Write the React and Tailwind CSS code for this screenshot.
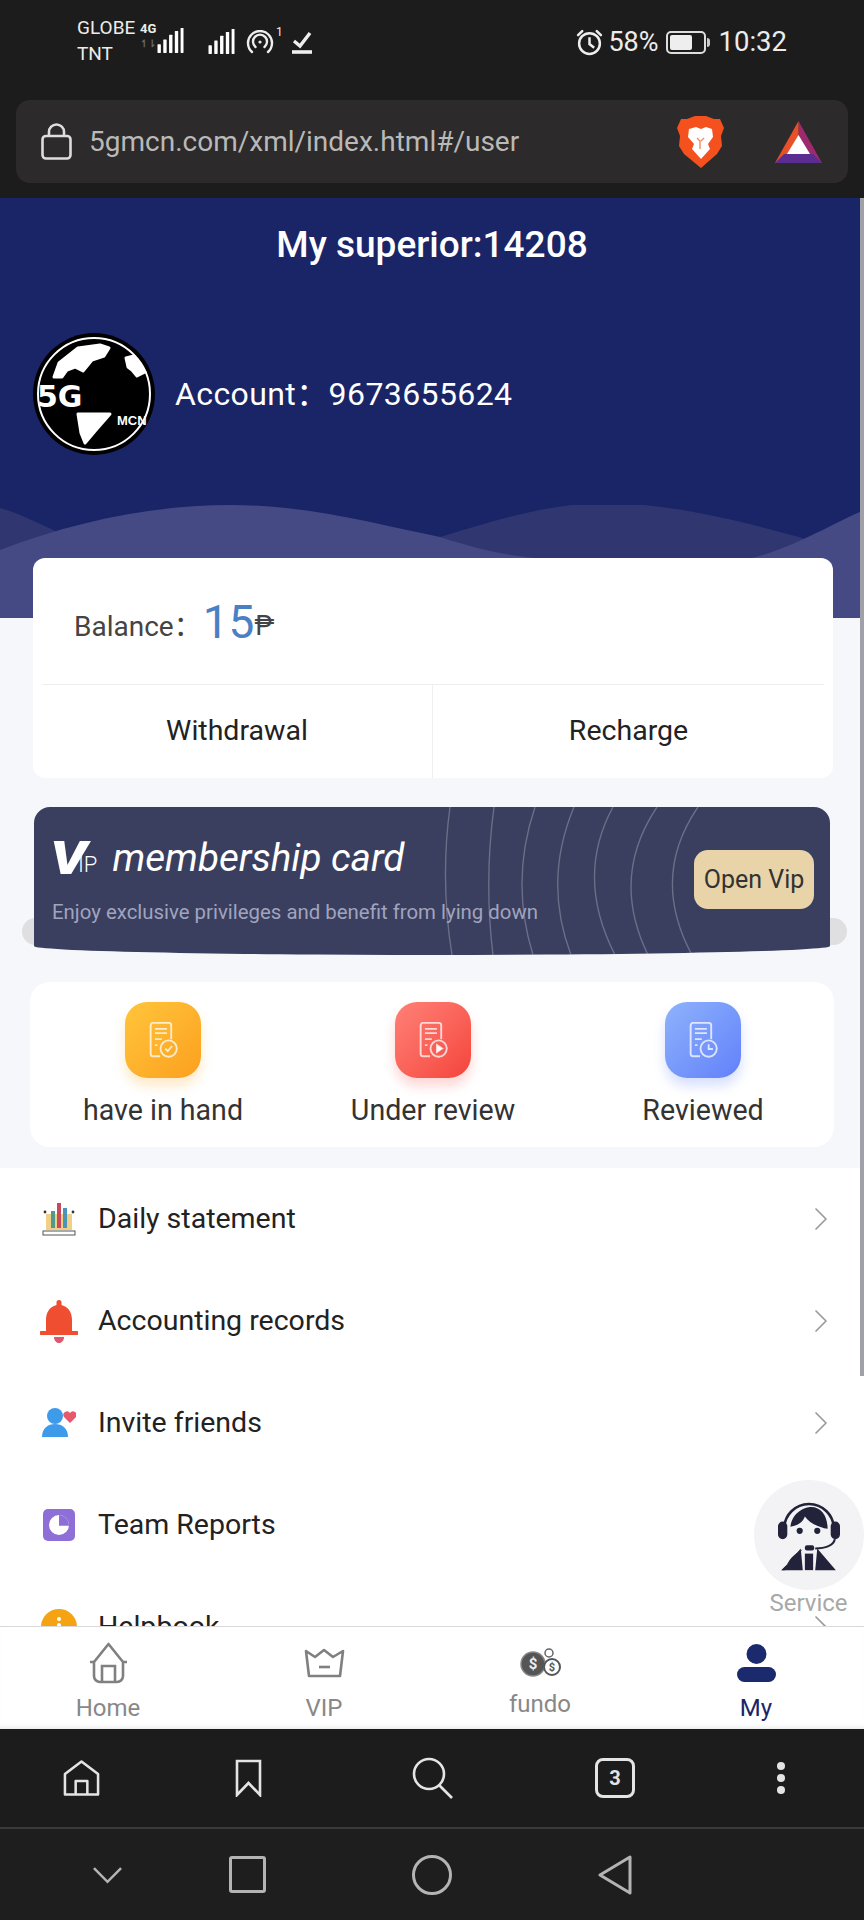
import { ChevronRight } from "lucide-react";

const BarsIcon = ({ className }) => (
  <svg viewBox="0 0 27 27" className={className} fill="#fff">
    <rect x="0" y="17" width="3.5" height="9" rx="0.5" />
    <rect x="6" y="12" width="3.5" height="14" rx="0.5" />
    <rect x="12" y="7" width="3.5" height="19" rx="0.5" />
    <rect x="18" y="3" width="3.5" height="23" rx="0.5" />
    <rect x="24" y="0" width="3" height="26" rx="0.5" />
  </svg>
);

const Hotspot = () => (
  <svg viewBox="0 0 28 24" className="w-7 h-6" fill="none" stroke="#eee" strokeWidth="2.4" strokeLinecap="round">
    <path d="M6 22A12 12 0 1 1 22 22" />
    <path d="M9.5 17A7 7 0 1 1 18.5 17" />
    <circle cx="14" cy="12" r="1.6" fill="#eee" stroke="none" />
  </svg>
);

const StatusBar = () => (
  <div className="h-[100px] flex pl-[77px] pr-[77px] pt-[15px] justify-between items-start text-[#ececec]">
    <div className="flex items-start">
      <div className="w-[62px] text-[19px] leading-[26px]">
        <div>GLOBE</div>
        <div>TNT</div>
      </div>
      <div className="ml-[1px] mt-[6px] w-[17px] text-[13px] font-bold leading-[16px]">
        4G
        <div className="text-[#666] text-[10px] leading-[14px]">↿⇂</div>
      </div>
      <BarsIcon className="mt-[13px] w-[27px] h-[26px]" />
      <BarsIcon className="ml-[24px] mt-[14px] w-[27px] h-[26px]" />
      <div className="ml-[11px] mt-[15px]"><Hotspot /></div>
      <div className="text-[12px] leading-[14px] mt-[10px] ml-[2px]">1</div>
      <div className="ml-[9px] mt-[15px] w-[20px]">
        <svg viewBox="0 0 20 24" className="w-5 h-6" fill="none" stroke="#eee">
          <path d="M2 11L8 16L18 3" strokeWidth="3.4" />
          <path d="M0 22H20" strokeWidth="3.6" />
        </svg>
      </div>
    </div>
    <div className="flex items-center mt-[12px] h-[30px]">
      <svg viewBox="0 0 26 26" className="w-[27px] h-[27px]" fill="none" stroke="#eee" strokeWidth="2.4">
        <circle cx="13" cy="14" r="10" />
        <path d="M13 8V14.5L17.5 18" />
        <path d="M2 6L6 2M24 6L20 2" strokeLinecap="round" />
      </svg>
      <span className="ml-[5px] text-[27px]">58%</span>
      <div className="ml-[7px] w-[40px] h-[23px] rounded-[5px] border-2 border-[#ddd] p-[2px]">
        <div className="w-[22px] h-full bg-[#eee] rounded-[2px]" />
      </div>
      <div className="ml-[1px] w-[3px] h-[9px] bg-[#ccc] rounded-r-sm" />
      <span className="ml-[9px] text-[27.5px]">10:32</span>
    </div>
  </div>
);

const BraveLogo = () => (
  <svg viewBox="0 0 47 52" className="w-[47px] h-[52px]">
    <path d="M10 3L18 0H29L37 3L43 3L47 12L44 20L45 30L40 38L24 52L7 38L2 30L3 20L0 12L4 3Z" fill="#f4511e" />
    <path d="M12 13L19 11L24 13L29 11L35 13L36 21L31 28L33 33L24 43L15 33L17 28L11 21Z" fill="#fff" />
    <path d="M20 22L23 25V33M27 22L24 25" stroke="#f08a6a" strokeWidth="1.4" fill="none" />
  </svg>
);

const BatLogo = () => (
  <svg viewBox="0 0 47 42" className="w-[47px] h-[42px]">
    <path d="M23.5 0L47 42H23.5Z" fill="#9e2a6e" />
    <path d="M23.5 0L0 42H23.5Z" fill="#e8502a" />
    <path d="M0 42L9 33H38L47 42Z" fill="#5b2d91" />
    <path d="M23.5 14L35 33H12Z" fill="#fff" />
  </svg>
);

const UrlBar = () => (
  <div className="mx-4 h-[83px] rounded-[14px] bg-[#2c2a2a] flex items-center pl-[25px] pr-[26px]">
    <svg viewBox="0 0 31 37" className="w-[31px] h-[37px]" fill="none" stroke="#ddd" strokeWidth="2.6">
      <rect x="1.5" y="13" width="28" height="22.5" rx="3.5" />
      <path d="M8 13V9A7.5 7.5 0 0 1 23 9V13" />
    </svg>
    <span className="ml-[17px] text-[28px] text-[#b9b9b9]">5gmcn.com/xml/index.html#/user</span>
    <div className="ml-auto"><BraveLogo /></div>
    <div className="ml-[51px]"><BatLogo /></div>
  </div>
);

const Avatar = () => (
  <svg viewBox="0 0 122 122" className="w-[122px] h-[122px] shrink-0">
    <circle cx="61" cy="61" r="61" fill="#000" />
    <circle cx="61" cy="61" r="56" fill="none" stroke="#fff" strokeWidth="2" />
    <g fill="#fff" stroke="#fff" strokeWidth="3" strokeLinejoin="round">
      <path d="M21 44L26 30L45 15L67 12L76 15L71 23L59 27L50 38L42 34L34 37L29 44Z" />
      <path d="M93 25L101 23L112 39L104 43L99 37L95 34Z" />
      <path d="M45 81L77 81L63 97L52 110L48 100Z" />
    </g>
    <text x="4" y="74" fontFamily="'DejaVu Sans',sans-serif" fontWeight="700" fontSize="30" fill="#fff">5G</text>
    <text x="84" y="92" fontFamily="'Liberation Sans',sans-serif" fontWeight="700" fontSize="13" fill="#fff">MCN</text>
  </svg>
);

const Waves = () => (
  <svg viewBox="0 0 864 113" className="absolute left-0 bottom-0 w-full h-[113px]">
    <path d="M0 3C25 10 45 22 60 28L60 60H0Z" fill="#2f3670" />
    <path d="M440 32C500 14 550 -2 606 -2C670 -2 740 16 799 32C815 38 830 46 845 52L845 80H440Z" fill="#2f3670" />
    <path d="M0 45C70 18 150 0 231 0C310 0 380 20 440 32C480 45 510 52 560 55H740C780 50 830 20 864 5V113H0Z" fill="#454a85" />
  </svg>
);

const Header = () => (
  <div className="relative h-[420px] bg-[#1a2568]">
    <Waves />
    <div className="relative pt-[23px] text-center text-white text-[37px] leading-[48px] font-medium">My superior:14208</div>
    <div className="relative mt-[64px] ml-[33px] flex items-center text-white">
      <Avatar />
      <span className="ml-[20px] text-[32px] tracking-[0.4px] font-[Roboto,'Noto_Sans_CJK_SC',sans-serif]">Account：9673655624</span>
    </div>
  </div>
);

const BalanceCard = () => (
  <div className="relative -mt-[60px] ml-[33px] mr-[31px] h-[220px] bg-white rounded-xl">
    <div className="h-[127px] mx-[9px] pl-[32px] pt-[12px] border-b border-[#eee] flex items-center">
      <span className="text-[28px] text-[#444] font-[Roboto,'Noto_Sans_CJK_SC',sans-serif]">Balance：</span>
      <span className="ml-[1px] -mt-[10px] text-[46px] text-[#4a80c4]">15</span>
      <span className="-mt-[2px] text-[27px] text-[#444]">₱</span>
    </div>
    <div className="h-[93px] flex text-[28.5px] text-[#222]">
      <div className="w-[400px] pl-[9px] flex items-center justify-center border-r border-[#eee]">Withdrawal</div>
      <div className="flex-1 pr-[9px] flex items-center justify-center">Recharge</div>
    </div>
  </div>
);

const VipCard = () => (
  <div className="relative mt-[29px] mx-[34px] h-[148px]">
    <div className="absolute -left-[12px] -right-[17px] top-[111px] h-[27px] rounded-full bg-[#dfdfe1]" />
    <div className="relative h-full pl-[18px] bg-[#3a3e5f] overflow-hidden [border-radius:16px_16px_50%_50%/16px_16px_9px_9px]">
      <svg viewBox="0 0 794 148" className="absolute inset-0 w-full h-full" fill="none" stroke="#ffffff" strokeOpacity="0.25" strokeWidth="1.4">
        <path d="M415 0Q405 74 417 148" />
        <path d="M459 0Q449 74 458 148" />
        <path d="M500 0Q475 74 498 148" />
        <path d="M539 0Q508 74 536 148" />
        <path d="M578 0Q540 70 580 148" />
        <path d="M622 0Q575 70 613 148" />
        <path d="M663 0Q615 70 657 148" />
      </svg>
      <div className="relative pt-[29px] flex items-center h-[72px] text-white">
        <span className="-ml-[2px] w-[28px] scale-x-125 origin-left text-[46px] leading-[46px] font-black italic">V</span>
        <span className="relative mt-[14px] text-[22px] leading-[24px] font-light">IP</span>
        <span className="ml-[15px] text-[38.6px] italic">membership card</span>
      </div>
      <div className="relative mt-[19px] text-[20.4px] leading-[28px] text-[#a0a4bd]">Enjoy exclusive privileges and benefit from lying down</div>
      <div className="absolute left-[660px] top-[43px] w-[120px] h-[59px] rounded-[14px] bg-[#e8d4a8] flex items-center justify-center text-[25px] text-[#333]">Open Vip</div>
    </div>
  </div>
);

const DocIcon = ({ badge }) => (
  <svg viewBox="0 0 34 42" className="w-[31px] h-[36px]" fill="none" stroke="#fff" strokeOpacity="0.75" strokeWidth="2.2">
    <path d="M13 40H5A3 3 0 0 1 2 37V4A3 3 0 0 1 5 1H23A3 3 0 0 1 26 4V20" />
    <path d="M7 8H21M7 13H21M7 20H15M7 27H10" />
    <circle cx="23" cy="31" r="9.5" />
    {badge === "check" && <path d="M19 31L22 34L27 28" />}
    {badge === "play" && <path d="M21 27L27 31L21 35Z" fill="#fff" />}
    {badge === "clock" && <path d="M23 26V31.5H28" />}
  </svg>
);

const StatItem = ({ label, badge, tile }) => (
  <div className="w-[270px] shrink-0 flex flex-col items-center">
    <div className={`w-[76px] h-[76px] rounded-[22px] flex items-center justify-center ${tile}`}>
      <DocIcon badge={badge} />
    </div>
    <span className="mt-[12px] text-[28.6px] leading-[40px] text-[#333]">{label}</span>
  </div>
);

const StatsCard = () => (
  <div className="mt-[27px] mx-[30px] h-[165px] pt-[20px] pl-[2px] bg-white rounded-[20px] flex justify-center">
    <StatItem label="have in hand" badge="check" tile="bg-gradient-to-br from-[#ffc53a] to-[#fca01e] shadow-[0_8px_12px_rgba(253,170,40,0.25)]" />
    <StatItem label="Under review" badge="play" tile="bg-gradient-to-br from-[#ff8077] to-[#f4423a] shadow-[0_8px_12px_rgba(245,70,60,0.22)]" />
    <StatItem label="Reviewed" badge="clock" tile="bg-gradient-to-br from-[#8fb2fb] to-[#6380fa] shadow-[0_8px_12px_rgba(100,130,250,0.25)]" />
  </div>
);

const DailyIcon = () => (
  <svg viewBox="0 0 34 34" className="w-[34px] h-[34px]">
    <rect x="4" y="12" width="26" height="16" fill="#f0cf87" />
    <rect x="9" y="9" width="4" height="17" fill="#4f9a8c" />
    <rect x="15" y="1" width="4" height="25" fill="#c9485b" />
    <rect x="21" y="6" width="4" height="20" fill="#4a94b8" />
    <circle cx="3" cy="10" r="1.4" fill="#333" />
    <circle cx="31" cy="10" r="1.4" fill="#333" />
    <rect x="1" y="29" width="32" height="4" fill="#fff" stroke="#555" />
  </svg>
);

const BellIcon = () => (
  <svg viewBox="0 0 38 43" className="w-[38px] h-[43px]" fill="#f04e30">
    <path d="M19 0A2.5 2.5 0 0 1 21.5 2.5V5C29 7 32 13 32 20V31H37A1.8 1.8 0 0 1 37 35H1A1.8 1.8 0 0 1 1 31H6V20C6 13 9 7 16.500 5V2.500A2.500 2.500 0 0 1 19 0Z" />
    <path d="M14 37H24C24 41 21 43 19 43C17 43 14 41 14 37Z" fill="#e0566a" />
  </svg>
);

const InviteIcon = () => (
  <svg viewBox="0 0 34 30" className="w-[34px] h-[30px]">
    <circle cx="13" cy="8" r="8" fill="#3d9be9" />
    <path d="M0 29C0 20 6 16 13 16C20 16 26 20 26 29Z" fill="#3d9be9" />
    <path d="M28 15L22 9A3.500 3.500 0 0 1 28 5A3.500 3.500 0 0 1 34 9Z" fill="#e5596b" />
  </svg>
);

const ReportIcon = () => (
  <svg viewBox="0 0 32 32" className="w-[32px] h-[32px]">
    <rect width="32" height="32" rx="5" fill="#8e6fd8" />
    <circle cx="16" cy="16" r="10" fill="#fff" />
    <path d="M16 16V6A10 10 0 0 1 26 16Z" fill="#8e6fd8" />
    <path d="M16 16H26" stroke="#8e6fd8" strokeWidth="1.5" />
  </svg>
);

const HelpIcon = () => (
  <svg viewBox="0 0 36 36" className="w-[36px] h-[36px]">
    <circle cx="18" cy="18" r="18" fill="#f5a313" />
    <rect x="16" y="8" width="4" height="4" rx="2" fill="#fff" />
    <rect x="16" y="14" width="4" height="14" rx="2" fill="#fff" />
  </svg>
);

const menu = [
  { label: "Daily statement", icon: <DailyIcon /> },
  { label: "Accounting records", icon: <BellIcon /> },
  { label: "Invite friends", icon: <InviteIcon /> },
  { label: "Team Reports", icon: <ReportIcon /> },
  { label: "Helpbook", icon: <HelpIcon /> },
];

const MenuList = () => (
  <div className="mt-[21px] bg-white">
    {menu.map((item) => (
      <div key={item.label} className="h-[102px] flex items-center text-[28.5px] text-[#222]">
        <div className="w-[98px] pl-[40px] pr-[20px] flex justify-center">{item.icon}</div>
        <span>{item.label}</span>
        <ChevronRight className="ml-auto mr-[23px] w-[40px] h-[40px] text-[#999]" strokeWidth={1} />
      </div>
    ))}
  </div>
);

const ServiceButton = () => (
  <div className="absolute left-[753px] top-[1282px] w-[111px] flex flex-col items-center">
    <div className="w-[110px] h-[110px] rounded-full bg-[#f3f3f5] flex items-center justify-center">
      <svg viewBox="0 0 60 68" className="w-[62px] h-[72px]" fill="#22233a">
        <path d="M6 28A24 24 0 0 1 54 28" fill="none" stroke="#22233a" strokeWidth="2.5" />
        <rect x="0" y="21" width="9" height="17" rx="4.500" />
        <rect x="51" y="21" width="9" height="17" rx="4.500" />
        <path d="M12 26C14 12 26 7 32 7C42 7 48 16 48 28C40 27 30 22 26 16C24 22 18 25 12 26Z" />
        <circle cx="21" cy="30" r="3" />
        <circle cx="38" cy="30" r="3" />
        <path d="M55 38C54 44 46 47 36 47" fill="none" stroke="#22233a" strokeWidth="2" />
        <rect x="26" y="44" width="9" height="5" rx="2" />
        <path d="M24 48L3 68H7C9 58 16 52 24 48Z" />
        <path d="M22 47L4 68H24Z" />
        <path d="M38 47L56 68H36Z" />
        <rect x="26" y="52" width="8" height="16" />
      </svg>
    </div>
    <span className="mt-[-1px] text-[24px] leading-[28px] text-[#a8a8a8]">Service</span>
  </div>
);

const NavItem = ({ label, icon, className = "mt-[2px]", color = "text-[#888]" }) => (
  <div className="flex-1 flex flex-col items-center">
    <div className="h-[58px] flex items-center justify-center">{icon}</div>
    <span className={`text-[24px] leading-[28px] ${className} ${color}`}>{label}</span>
  </div>
);

const CoinsIcon = () => (
  <svg viewBox="0 0 41 30" className="w-[41px] h-[30px]">
    <circle cx="13" cy="16" r="12" fill="#555" stroke="#888" strokeWidth="1.5" />
    <text x="13" y="21" textAnchor="middle" fontSize="15" fontWeight="700" fill="#eee" fontFamily="Roboto,sans-serif">$</text>
    <circle cx="32" cy="19" r="8" fill="#fff" stroke="#555" strokeWidth="2" />
    <text x="32" y="23" textAnchor="middle" fontSize="11" fontWeight="700" fill="#555" fontFamily="Roboto,sans-serif">$</text>
    <circle cx="29" cy="5" r="4" fill="#fff" stroke="#666" strokeWidth="1.5" />
  </svg>
);

const BottomNav = () => (
  <div className="h-[103px] bg-white border-t border-[#d9d9d9] flex pt-[7px] shadow-[inset_0_-5px_4px_-3px_rgba(0,0,0,0.08)]">
    <NavItem
      label="Home"
      icon={
        <svg viewBox="0 0 41 42" className="w-[41px] h-[42px]" fill="none" stroke="#808080" strokeWidth="2.6">
          <path d="M6 20L20.500 2L35 20V34A6 6 0 0 1 29 40H12A6 6 0 0 1 6 34Z" strokeLinejoin="round" />
          <path d="M2 20L6 20M35 20L39 20" />
          <path d="M14 40V24H27V40" />
        </svg>
      }
    />
    <NavItem
      label="VIP"
      icon={
        <svg viewBox="0 0 41 30" className="w-[41px] h-[30px]" fill="none" stroke="#808080" strokeWidth="2.6">
          <path d="M2 3L11 9L20 2L29 9L39 3L36 28H5Z" strokeLinejoin="round" />
          <path d="M15 19H26" />
        </svg>
      }
    />
    <NavItem label="fundo" icon={<CoinsIcon />} className="-mt-[2px]" />
    <NavItem
      label="My"
      color="text-[#1a2568]"
      icon={
        <svg viewBox="0 0 39 38" className="w-[39px] h-[38px]" fill="#1a2a6c">
          <ellipse cx="19.500" cy="10" rx="10" ry="10" />
          <rect x="0" y="23" width="39" height="15" rx="7.500" />
        </svg>
      }
    />
  </div>
);

const Toolbar = () => (
  <div className="h-[98px] bg-[#1c1c1c] flex items-center pl-[63px]">
    <svg viewBox="0 0 38 38" className="w-[37px] h-[38px]" fill="none" stroke="#e4e4e4" strokeWidth="2.6" strokeLinejoin="round">
      <path d="M2 15L19 2L36 15V36H2Z" />
      <path d="M13 36V22H25V36" />
    </svg>
    <svg viewBox="0 0 27 38" className="ml-[135px] w-[27px] h-[38px]" fill="none" stroke="#e4e4e4" strokeWidth="2.6">
      <path d="M2 2H25V36L13.500 24L2 36Z" />
    </svg>
    <svg viewBox="0 0 42 42" className="ml-[150px] w-[42px] h-[42px]" fill="none" stroke="#e4e4e4" strokeWidth="2.6">
      <circle cx="17" cy="17" r="15" />
      <path d="M27 28L40 41" />
    </svg>
    <div className="ml-[141px] w-[40px] h-[40px] rounded-[8px] border-[3px] border-[#e4e4e4] flex items-center justify-center text-[20px] font-bold text-[#e4e4e4]">3</div>
    <div className="ml-[142px] flex flex-col gap-[4px]">
      <div className="w-[8px] h-[8px] rounded-full bg-[#e4e4e4]" />
      <div className="w-[8px] h-[8px] rounded-full bg-[#e4e4e4]" />
      <div className="w-[8px] h-[8px] rounded-full bg-[#e4e4e4]" />
    </div>
  </div>
);

const SystemNav = () => (
  <div className="flex-1 bg-[#1e1e1e] border-t-2 border-[#3a3a3a] flex items-center pl-[92px]">
    <svg viewBox="0 0 32 18" className="w-[31px] h-[18px]" fill="none" stroke="#b4b4b4" strokeWidth="2.6">
      <path d="M2 2L16 16L30 2" />
    </svg>
    <div className="ml-[106px] w-[37px] h-[37px] rounded-[3px] border-[3px] border-[#b4b4b4]" />
    <div className="ml-[146px] w-[40px] h-[40px] rounded-full border-[3px] border-[#b4b4b4]" />
    <svg viewBox="0 0 34 40" className="ml-[146px] w-[34px] h-[40px]" fill="none" stroke="#b4b4b4" strokeWidth="3" strokeLinejoin="round">
      <path d="M32 2V38L2 20Z" />
    </svg>
  </div>
);

export default function App() {
  return (
    <div className="w-[864px] h-[1920px] flex flex-col overflow-hidden font-[Roboto,sans-serif]">
      <div className="h-[198px] shrink-0 bg-[#1c1c1c]">
        <StatusBar />
        <UrlBar />
      </div>
      <div className="relative h-[1428px] shrink-0 overflow-hidden bg-[#f6f7fb]">
        <Header />
        <BalanceCard />
        <VipCard />
        <StatsCard />
        <MenuList />
        <ServiceButton />
        <div className="absolute right-0 top-0 w-[4px] h-[1178px] bg-[#a0a0a8]" />
      </div>
      <BottomNav />
      <Toolbar />
      <SystemNav />
    </div>
  );
}
